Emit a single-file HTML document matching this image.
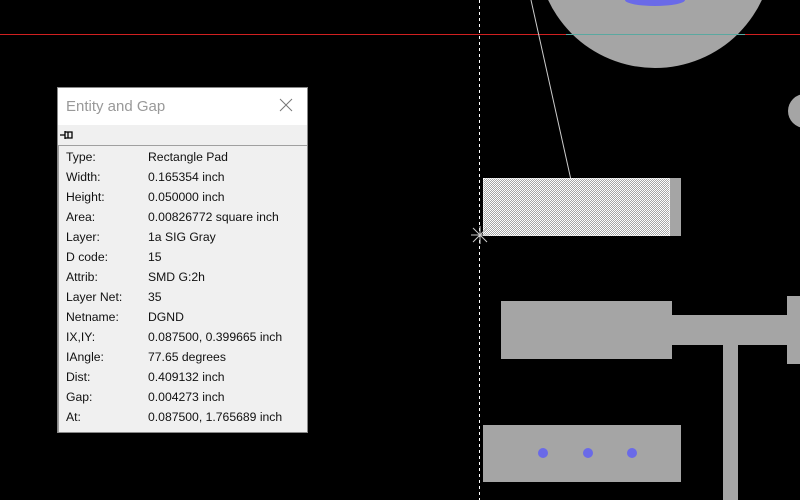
<!DOCTYPE html>
<html><head><meta charset="utf-8"><style>
*{margin:0;padding:0;box-sizing:border-box}
body{width:800px;height:500px;background:#000;position:relative;overflow:hidden;font-family:"Liberation Sans",sans-serif}
.a{position:absolute}
#dlg{left:57px;top:87px;width:251px;height:346px;background:#f0f0f0;border:1px solid #888}
#tt{position:absolute;left:0;top:0;width:249px;height:37px;background:#fff;color:#999;font-size:15px;line-height:37px;padding-left:8px}
#x{position:absolute;right:14px;top:10px;width:14px;height:14px}
#tb{position:absolute;left:0;top:37px;width:249px;height:20px;background:#f0f0f0}
#ct{position:absolute;left:0;top:57px;width:249px;height:287px;border-top:1px solid #a0a0a0;border-left:1px solid #a0a0a0;}
.r{position:absolute;left:7px;font-size:12.2px;color:#111;height:20px;line-height:20px;white-space:nowrap}
.r span{position:absolute;left:82px}
</style></head><body>
<svg class="a" style="left:0;top:0" width="800" height="500">
<circle cx="655" cy="-50" r="118" fill="#a5a5a5"/>
<ellipse cx="655" cy="0" rx="30" ry="6" fill="#6a6ae8"/>
<line x1="0" y1="34.5" x2="800" y2="34.5" stroke="#d02020" stroke-width="1"/>
<line x1="566" y1="34.5" x2="745" y2="34.5" stroke="#5aa8a0" stroke-width="1"/>
<circle cx="805" cy="111" r="17" fill="#a5a5a5"/>
<line x1="531" y1="0" x2="571" y2="180" stroke="#ccc" stroke-width="1"/>
<line x1="479.5" y1="0" x2="479.5" y2="500" stroke="#fff" stroke-dasharray="3,3"/>
<defs><pattern id="ck" width="2" height="2" patternUnits="userSpaceOnUse"><rect width="2" height="2" fill="#a5a5a5"/><rect width="1" height="1" fill="#fff"/><rect x="1" y="1" width="1" height="1" fill="#fff"/></pattern></defs>
<rect x="670" y="178" width="11" height="58" fill="#a5a5a5"/>
<rect x="483" y="178" width="187" height="58" fill="url(#ck)"/>
<rect x="483.5" y="178.5" width="186" height="57" fill="none" stroke="#fff" stroke-dasharray="2,2"/>
<path d="M473 228l14 14M487 228l-14 14M480 226v18M471 235h18" stroke="#ccc" stroke-width="1"/>
<rect x="501" y="301" width="171" height="58" fill="#a5a5a5"/>
<rect x="672" y="315" width="116" height="30" fill="#a5a5a5"/>
<rect x="787" y="296" width="13" height="68" fill="#a5a5a5"/>
<rect x="723" y="345" width="15" height="155" fill="#a5a5a5"/>
<rect x="483" y="425" width="198" height="57" fill="#a5a5a5"/>
<circle cx="543" cy="453" r="5" fill="#6a6ae8"/>
<circle cx="588" cy="453" r="5" fill="#6a6ae8"/>
<circle cx="632" cy="453" r="5" fill="#6a6ae8"/>
</svg>
<div id="dlg" class="a">
<div id="tt">Entity and Gap
<svg id="x" viewBox="0 0 14 14"><path d="M1 1L13 13M13 1L1 13" stroke="#777" stroke-width="1"/></svg></div>
<div id="tb"><svg style="position:absolute;left:2px;top:4px" width="16" height="12"><path d="M0 6h5M5 2v8M5 3h7v6H5M8 3v6" stroke="#000" fill="none" stroke-width="1.3"/></svg></div>
<div id="ct">
<div class="r" style="top:1px">Type:<span>Rectangle Pad</span></div>
<div class="r" style="top:21px">Width:<span>0.165354 inch</span></div>
<div class="r" style="top:41px">Height:<span>0.050000 inch</span></div>
<div class="r" style="top:61px">Area:<span>0.00826772 square inch</span></div>
<div class="r" style="top:81px">Layer:<span>1a SIG Gray</span></div>
<div class="r" style="top:101px">D code:<span>15</span></div>
<div class="r" style="top:121px">Attrib:<span>SMD G:2h</span></div>
<div class="r" style="top:141px">Layer Net:<span>35</span></div>
<div class="r" style="top:161px">Netname:<span>DGND</span></div>
<div class="r" style="top:181px">IX,IY:<span>0.087500, 0.399665 inch</span></div>
<div class="r" style="top:201px">IAngle:<span>77.65 degrees</span></div>
<div class="r" style="top:221px">Dist:<span>0.409132 inch</span></div>
<div class="r" style="top:241px">Gap:<span>0.004273 inch</span></div>
<div class="r" style="top:261px">At:<span>0.087500, 1.765689 inch</span></div>
</div></div>
</body></html>
